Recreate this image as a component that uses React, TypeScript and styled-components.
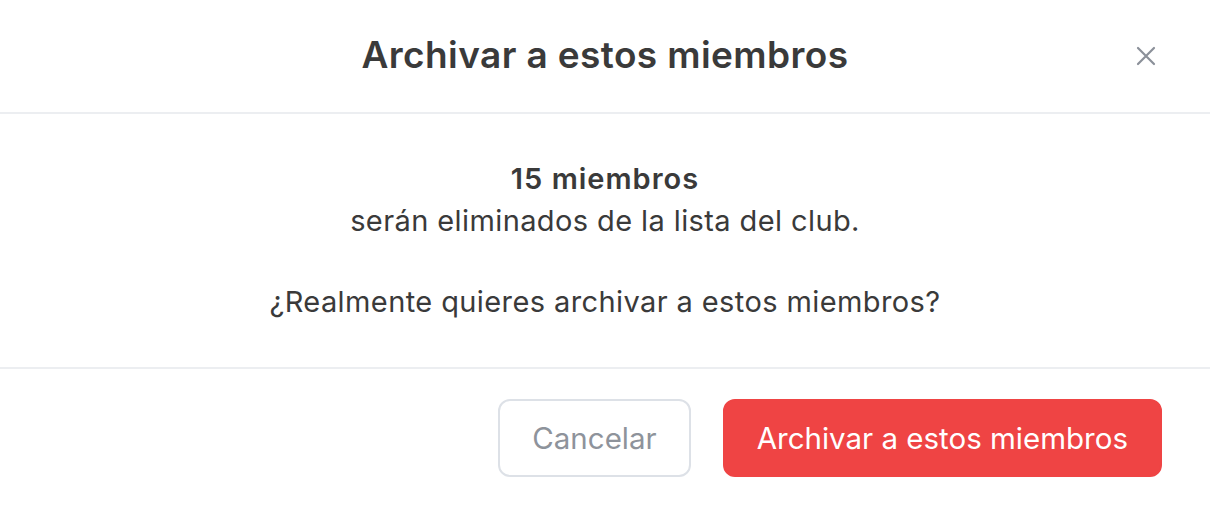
import React from 'react';
import styled, { createGlobalStyle } from 'styled-components';

const Global = createGlobalStyle`
  html, body {
    margin: 0;
    background: #fff;
  }
  body {
    font-family: Inter, "Noto Sans", "Liberation Sans", sans-serif;
    color: #3a3a3a;
  }
`

const Modal = styled.div`
  width: 1210px;
  height: 510px;
  display: flex;
  flex-direction: column;
  background: #fff;
`

const Header = styled.div`
  height: 114px;
  position: relative;
  display: flex;
  align-items: center;
  justify-content: center;
  border-bottom: 2px solid #eceef1;
  box-sizing: border-box;
  padding-bottom: 4px;
`

const Title = styled.h2`
  margin: 0;
  font-size: 37px;
  font-weight: 600;
  color: #3a3a3a;
  letter-spacing: 0.4px;
`

const Close = styled.button`
  position: absolute;
  right: 52px;
  top: 44px;
  width: 24px;
  height: 24px;
  padding: 0;
  border: 0;
  background: none;
  color: #8b9099;
  display: flex;
  align-items: center;
  justify-content: center;
  cursor: pointer;
`

const Body = styled.div`
  padding: 44px 48px 44px;
  border-bottom: 2px solid #eceef1;
  text-align: center;
  font-size: 29px;
  line-height: 42px;
  letter-spacing: 0.4px;
`

const Line = styled.p<{ $bold?: boolean; $gap?: boolean }>`
  margin: ${p => (p.$gap ? '39px 0 0' : '0')};
  font-weight: ${p => (p.$bold ? 600 : 400)};
  letter-spacing: ${p => (p.$bold ? '1px' : 'inherit')};
`

const Footer = styled.div`
  flex: 1;
  display: flex;
  justify-content: flex-end;
  align-items: flex-start;
  gap: 32px;
  padding: 30px 48px 0;
`

const Button = styled.button<{ $danger?: boolean }>`
  height: 78px;
  padding: 0 32px;
  border-radius: 12px;
  font-family: inherit;
  font-size: 29.5px;
  font-weight: 400;
  cursor: pointer;
  border: 2px solid ${p => (p.$danger ? '#ef4444' : '#dde1e7')};
  background: ${p => (p.$danger ? '#ef4444' : '#fff')};
  color: ${p => (p.$danger ? '#fff' : '#8e939b')};
`

export default function App() {
  return (
    <>
      <Global />
      <Modal>
        <Header>
          <Title>Archivar a estos miembros</Title>
          <Close aria-label="Cerrar">
            <svg width="22" height="22" viewBox="0 0 22 22" fill="none" stroke="currentColor" strokeWidth="2.2" strokeLinecap="round">
              <path d="M3 3 L19 19 M19 3 L3 19" />
            </svg>
          </Close>
        </Header>
        <Body>
          <Line $bold>15 miembros</Line>
          <Line>serán eliminados de la lista del club.</Line>
          <Line $gap>¿Realmente quieres archivar a estos miembros?</Line>
        </Body>
        <Footer>
          <Button>Cancelar</Button>
          <Button $danger>Archivar a estos miembros</Button>
        </Footer>
      </Modal>
    </>
  );
}
